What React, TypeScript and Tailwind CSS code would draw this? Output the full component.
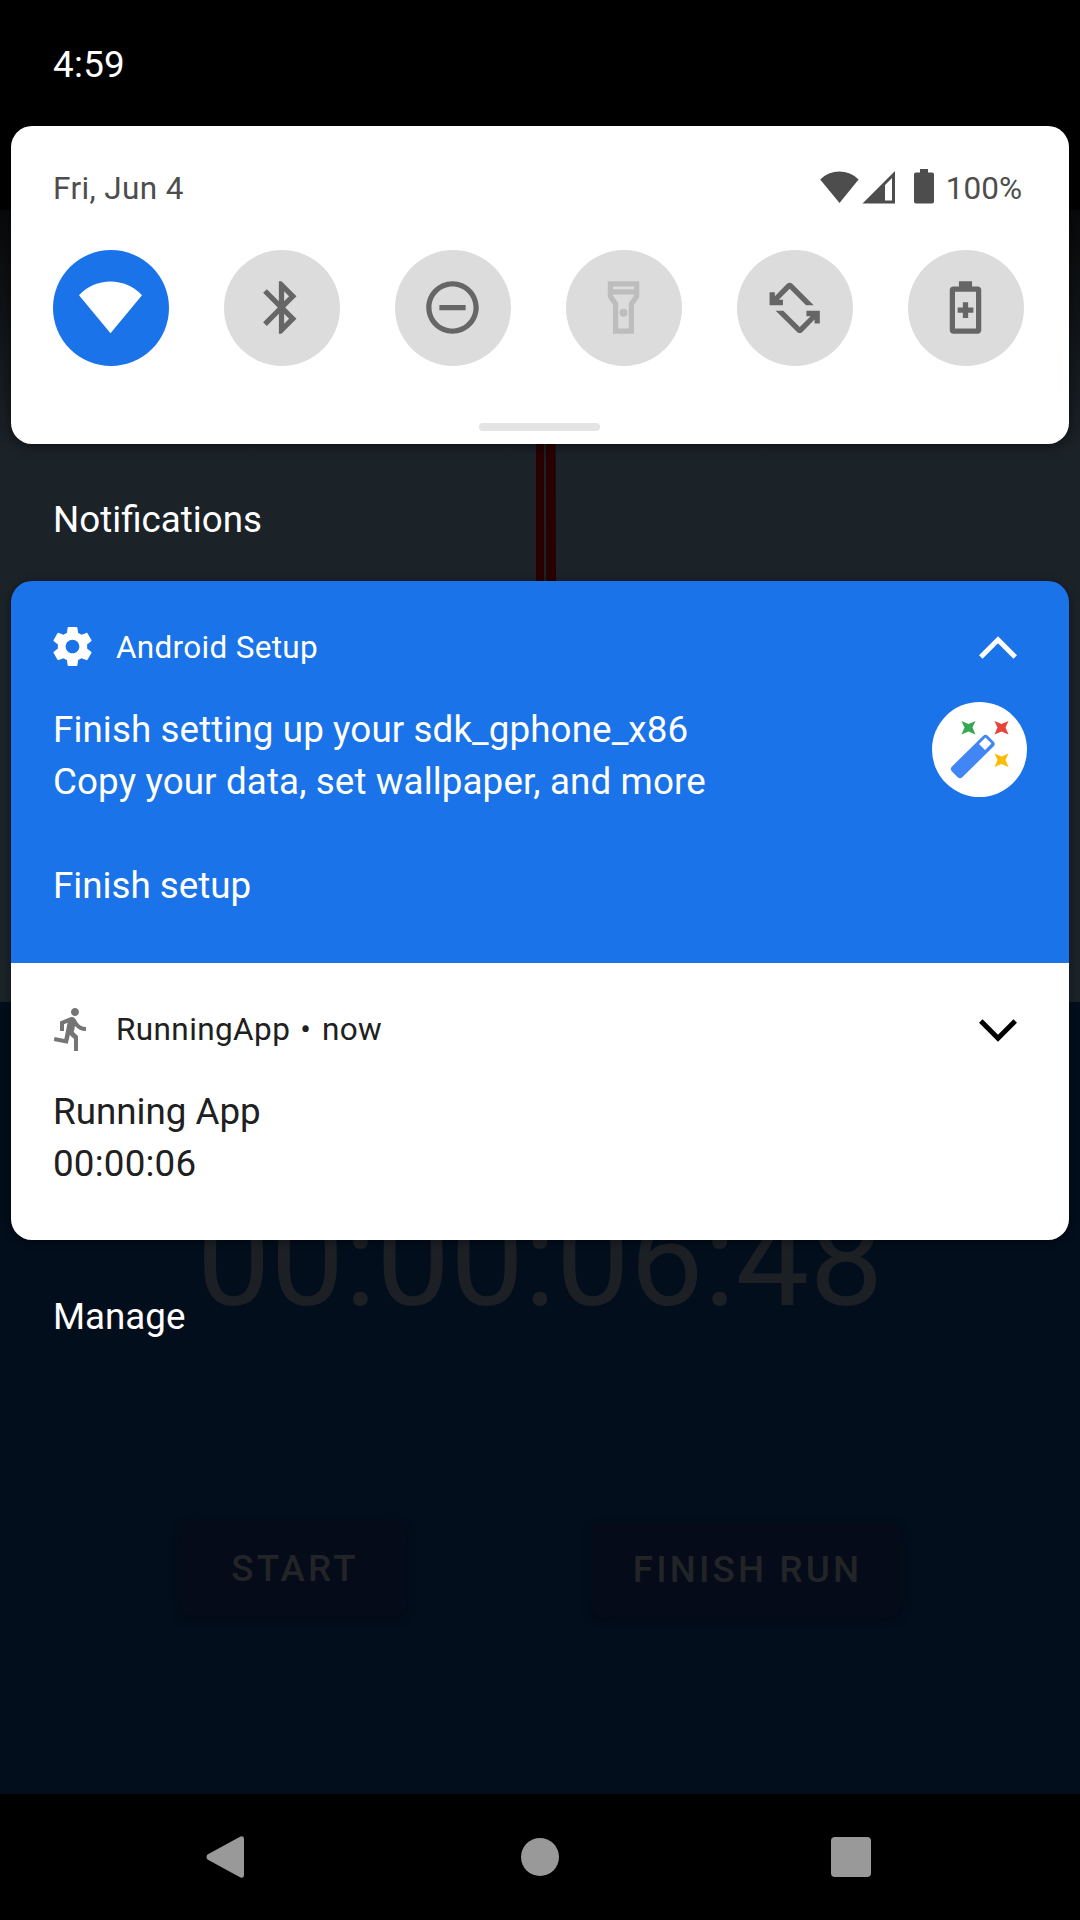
import React from "react";

type P = { className?: string };

const WifiIcon = ({ className }: P) => (
  <svg viewBox="0 0 24 24" fill="currentColor" className={className}>
    <path d="M12 21.8 24 7.3A16.4 16.4 0 0 0 0 7.3Z" />
  </svg>
);
const BluetoothIcon = ({ className }: P) => (
  <svg viewBox="0 0 24 24" fill="currentColor" className={className}>
    <path d="M17.71 7.71L12 2h-1v7.59L6.41 5 5 6.41 10.59 12 5 17.59 6.41 19 11 14.41V22h1l5.71-5.71-4.3-4.29 4.3-4.29zM13 5.83l1.88 1.88L13 9.59V5.83zm1.88 10.46L13 18.17v-3.76l1.88 1.88z" />
  </svg>
);
const DndIcon = ({ className }: P) => (
  <svg viewBox="0 0 24 24" fill="currentColor" className={className}>
    <path d="M7 11v2h10v-2H7zm5-9C6.48 2 2 6.48 2 12s4.48 10 10 10 10-4.48 10-10S17.52 2 12 2zm0 18c-4.41 0-8-3.59-8-8s3.59-8 8-8 8 3.59 8 8-3.59 8-8 8z" />
  </svg>
);
const FlashlightIcon = ({ className }: P) => (
  <svg viewBox="0 0 24 24" fill="currentColor" className={className}>
    <path d="M6 2v6l2 3v11h8V11l2-3V2H6zm10 2v1H8V4h8zm-2 6.4V20h-4v-9.6L8 7.39V7h8v.39l-2 3.01z" />
    <circle cx="12" cy="14" r="1.5" />
  </svg>
);
const rotateArm =
  "M19.3 11.1H16.4L10.15 4.85 6 9H7.600V11.100H2.500V6.200H4.500V7.700L9.250 2.900Q10.150 2.200 11.050 2.900Z";
const RotateIcon = ({ className }: P) => (
  <svg viewBox="0 0 24 24" fill="currentColor" className={className}>
    <path d={rotateArm} />
    <path d={rotateArm} transform="rotate(180 12.07 12.15)" />
  </svg>
);
const BatterySaverIcon = ({ className }: P) => (
  <svg viewBox="0 0 24 24" fill="currentColor" className={className}>
    <path fillRule="evenodd" d="M16.7 4H14.5V2h-5v2H7.3C6.6 4 6 4.6 6 5.3v15.4C6 21.4 6.6 22 7.3 22h9.4c.7 0 1.3-.6 1.3-1.3V5.3C18 4.6 17.4 4 16.7 4zM16 20H8V6h8v14z" />
    <path d="M11 10h2v2h2v2h-2v2h-2v-2H9v-2h2z" />
  </svg>
);

const tiles = [
  { Icon: WifiIcon, tone: "bg-[#1a73e8] text-white" },
  { Icon: BluetoothIcon, tone: "bg-[#dcdcdc] text-[#666666]" },
  { Icon: DndIcon, tone: "bg-[#dcdcdc] text-[#666666]" },
  { Icon: FlashlightIcon, tone: "bg-[#dcdcdc] text-[#bdbdbd]" },
  { Icon: RotateIcon, tone: "bg-[#dcdcdc] text-[#666666]" },
  { Icon: BatterySaverIcon, tone: "bg-[#dcdcdc] text-[#666666]" },
];

function AppBackdrop() {
  return (
    <div className="absolute inset-0 flex flex-col">
      <div className="h-[210px] bg-black" />
      <div className="flex h-[792px] justify-center bg-linear-to-b from-[#08090a] via-[#1b2228] via-30% to-[#1b2228]">
        <svg viewBox="0 0 24 792" className="ml-[12px] h-full w-[24px]">
          <path d="M2 0h8v792H2z" fill="#280000" />
          <path d="M11.5 0H21L23 792H13z" fill="#280000" />
        </svg>
      </div>
      <div className="flex h-[792px] flex-col items-center bg-[#020e1b]">
        <div className="mt-[181px] text-[131.25px] leading-[154px] tracking-[0.1px] text-[#1c1f24]">00:00:06:48</div>
        <div className="mt-[183px] flex h-[97px] w-full items-start pl-[180px] text-[36.75px] font-medium tracking-[3.15px] text-[#222427]">
          <div className="flex h-[96px] w-[226px] items-center justify-center rounded-[10px] bg-[#050b18] pt-[2px] pl-[4px] shadow-[0_3px_8px_#020b15]">START</div>
          <div className="mt-px ml-[185px] flex h-[96px] w-[310px] items-center justify-center rounded-[10px] bg-[#050b18] pt-[2px] pl-[3px] shadow-[0_3px_8px_#020b15]">FINISH RUN</div>
        </div>
      </div>
      <div className="flex-1 bg-black" />
    </div>
  );
}

function QuickSettings() {
  return (
    <section className="mx-[11px] flex h-[318px] flex-col rounded-[21px] bg-white px-[42px] shadow-[0_2px_12px_rgba(0,0,0,0.5)]">
      <div className="mt-[40px] flex h-[44px] items-center pt-[2px] pr-[5px] text-[31.5px] leading-[44px] text-[#4d4d4d]">
        <span className="tracking-[0.38px]">Fri, Jun 4</span>
        <svg viewBox="0 0 116 36" className="ml-auto h-[36px] w-[116px] -translate-y-[3px]" fill="currentColor">
          <path d="M20.5 35 39.6 11.5A27 27 0 0 0 1.2 11.5Z" />
          <path fillRule="evenodd" d="M43.5 35.5 76 3V35.500ZM66 17V32.500H73V10Z" />
          <path d="M101 1h8v3.500h4a2 2 0 0 1 2 2V33.500a2 2 0 0 1-2 2H97a2 2 0 0 1-2-2V6.500a2 2 0 0 1 2-2h4z" />
        </svg>
        <span className="ml-[11px]">100%</span>
      </div>
      <div className="mt-[40px] flex justify-between pr-[3px]">
        {tiles.map(({ Icon, tone }, i) => (
          <div key={i} className={`flex size-[116px] items-center justify-center rounded-full pr-px pb-[2px] ${tone}`}>
            <Icon className="size-[63px]" />
          </div>
        ))}
      </div>
      <div className="mt-[57px] ml-[426px] h-[8px] w-[121px] rounded-full bg-[#e4e4e4]" />
    </section>
  );
}

function SetupNotification() {
  return (
    <article className="h-[382px] bg-[#1a73e8] pr-[42px] pl-[42px] text-white">
      <div className="flex h-[131px] items-center pr-[10px]">
        <svg viewBox="0 0 24 24" fill="currentColor" className="-ml-[4px] size-[47px]">
          <path d="M19.43 12.98c.04-.32.07-.64.07-.98s-.03-.66-.07-.98l2.11-1.65c.19-.15.24-.42.12-.64l-2-3.46c-.12-.22-.39-.3-.61-.22l-2.49 1c-.52-.4-1.08-.73-1.69-.98l-.38-2.65C14.46 2.18 14.25 2 14 2h-4c-.25 0-.46.18-.49.42l-.38 2.65c-.61.25-1.17.59-1.69.98l-2.49-1c-.23-.09-.49 0-.61.22l-2 3.46c-.13.22-.07.49.12.64l2.11 1.65c-.04.32-.07.65-.07.98s.03.66.07.98l-2.11 1.65c-.19.15-.24.42-.12.64l2 3.46c.12.22.39.3.61.22l2.49-1c.52.4 1.08.73 1.69.98l.38 2.65c.03.24.24.42.49.42h4c.25 0 .46-.18.49-.42l.38-2.65c.61-.25 1.17-.59 1.69-.98l2.49 1c.23.09.49 0 .61-.22l2-3.46c.12-.22.07-.49-.12-.64l-2.11-1.65zM12 15.5c-1.93 0-3.5-1.57-3.5-3.5s1.57-3.5 3.5-3.5 3.5 1.57 3.5 3.5-1.57 3.5-3.5 3.5z" />
        </svg>
        <span className="mt-[2px] ml-[20px] text-[31.5px] leading-[38px] tracking-[0.3px]">Android Setup</span>
        <svg viewBox="0 0 38 23" className="mt-[2px] ml-auto h-[23px] w-[38px]" fill="none" stroke="currentColor" strokeWidth="5">
          <path d="M1.8 21 19 3.7 36.2 21" />
        </svg>
      </div>
      <div className="-mt-[9px] flex justify-between">
        <div className="mt-px text-[36.75px] leading-[52px]">
          <div className="tracking-[0.1px]">Finish setting up your sdk_gphone_x86</div>
          <div className="tracking-[0.12px]">Copy your data, set wallpaper, and more</div>
          <div className="mt-[52px]">Finish setup</div>
        </div>
        <svg viewBox="0 0 95 95" className="-mt-px size-[95px]">
          <circle cx="47.5" cy="47.5" r="47.5" fill="#fff" />
          <path fillRule="evenodd" fill="#4285f4" d="M20 64.500 51 34Q53.500 31.500 56 34L61.500 39.500Q64 42 61.500 44.500L30.500 75Q28 77.500 25.500 75L20 69.500Q17.500 67 20 64.500ZM53.500 35.500 47 42 53 48 59.500 41.500Z" />
          <path fill="#34a853" d="M29.5 19 36.5 22 43.5 19 40.5 25.5 43.5 32.5 36.5 29.5 29.5 32.5 32.5 25.5Z" />
          <path fill="#ea4335" d="M62.5 19 69.5 22 76.5 19 73.5 25.5 76.5 32.5 69.5 29.5 62.5 32.5 65.5 25.5Z" />
          <path fill="#fbbc04" d="M62.500 51.500 69.500 54.500 76.500 51.500 73.500 58 76.500 65 69.500 62 62.500 65 65.500 58Z" />
        </svg>
      </div>
    </article>
  );
}

function RunningNotification() {
  return (
    <article className="h-[277px] bg-white px-[42px] text-[#202020]">
      <div className="flex h-[131px] items-center pr-[10px]">
        <svg viewBox="0 0 24 24" className="-ml-[5px] size-[48px] text-[#757575]" fill="currentColor">
          <path d="M13.49 5.48c1.1 0 2-.9 2-2s-.9-2-2-2-2 .9-2 2 .9 2 2 2zm-3.6 13.9l1-4.4 2.1 2v6h2v-7.5l-2.1-2 .6-3c1.3 1.5 3.3 2.5 5.5 2.5v-2c-1.9 0-3.5-1-4.3-2.4l-1-1.6c-.4-.6-1-1-1.7-1-.3 0-.5.1-.8.1l-5.2 2.2v4.7h2v-3.4l1.8-.7-1.6 8.1-4.9-1-.4 2 7 1.4z" />
        </svg>
        <div className="mt-[3px] ml-[20px] flex text-[31.5px] leading-[38px]">
          <span className="tracking-[0.4px]">RunningApp</span>
          <span className="ml-[10px]">•</span>
          <span className="ml-[11px] tracking-[0.4px]">now</span>
        </div>
        <svg viewBox="0 0 38 23" className="mt-[3px] ml-auto h-[23px] w-[38px] text-black" fill="none" stroke="currentColor" strokeWidth="5">
          <path d="M1.8 2 19 19.3 36.2 2" />
        </svg>
      </div>
      <div className="-mt-[8px] text-[36.75px] leading-[52px]">
        <div>Running App</div>
        <div className="tracking-[0.2px]">00:00:06</div>
      </div>
    </article>
  );
}

export default function App() {
  return (
    <div className="relative h-[1920px] w-[1080px] overflow-hidden bg-black font-[Roboto,sans-serif]">
      <AppBackdrop />
      <main className="relative flex h-full flex-col text-white">
        <header className="flex h-[126px] items-center pt-[3px] pl-[53px] text-[36.75px] leading-[44px] tracking-[0.3px]">4:59</header>
        <QuickSettings />
        <h2 className="flex h-[137px] items-center pt-[15px] pl-[53px] text-[36.75px] leading-[44px]">Notifications</h2>
        <div className="mx-[11px] overflow-hidden rounded-[21px] shadow-[0_2px_8px_rgba(0,0,0,0.4)]">
          <SetupNotification />
          <RunningNotification />
        </div>
        <div className="mt-[55px] pl-[53px] text-[36.75px] leading-[44px]">Manage</div>
        <nav className="mt-auto flex h-[126px] items-center bg-black pl-[206px] text-[#999999]">
          <svg viewBox="0 0 38 42" className="h-[42px] w-[38px]" fill="currentColor">
            <path d="M1.5 18.500 34.500.6Q38 -.5 38 3V39Q38 42.500 34.500 41.400L1.500 23.500Q-.5 21 1.500 18.500Z" />
          </svg>
          <div className="ml-[277px] size-[38px] rounded-full bg-[#999999]" />
          <div className="ml-[272px] size-[40px] rounded-[4px] bg-[#999999]" />
        </nav>
      </main>
    </div>
  );
}
